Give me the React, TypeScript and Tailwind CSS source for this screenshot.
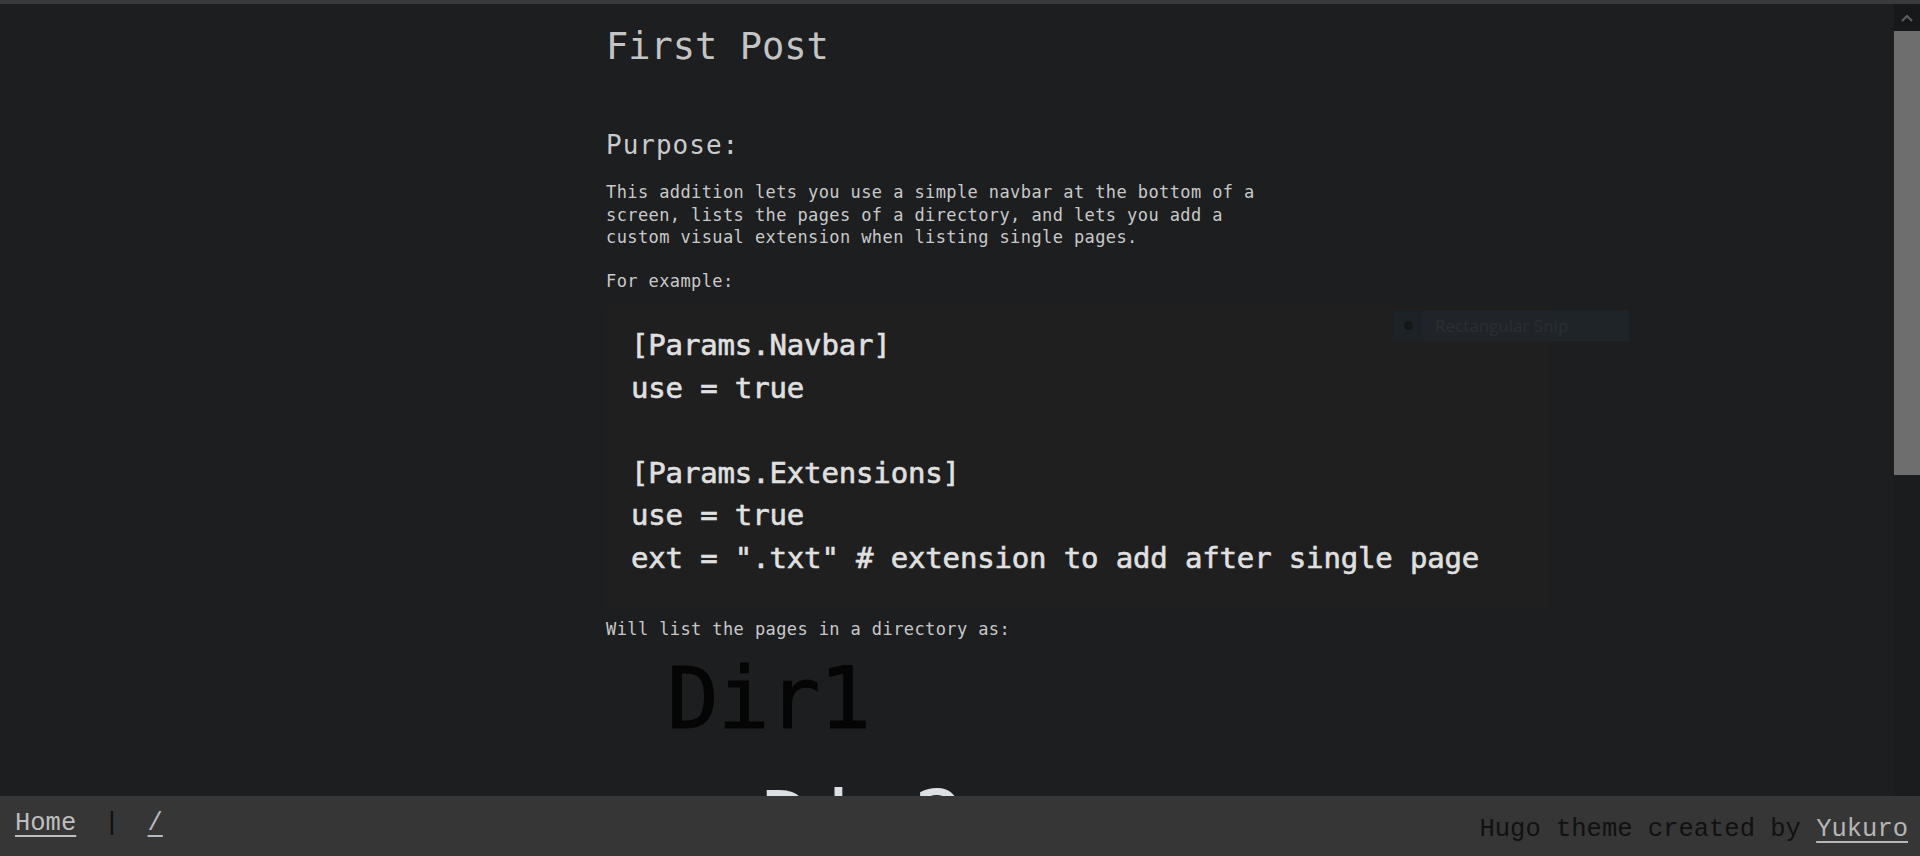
import React from "react";

const mono = { fontFamily: '"DejaVu Sans Mono", monospace' };
const courier = { fontFamily: '"Liberation Mono", "Courier New", monospace' };

const codeLines = [
  "[Params.Navbar]",
  "use = true",
  "",
  "[Params.Extensions]",
  "use = true",
  'ext = ".txt" # extension to add after single page',
];

function CodeShot() {
  return (
    <div className="relative mt-[14px] h-[304px] w-[943px] bg-[#1f1f1f] pt-[18px] pl-[25px]">
      {codeLines.map((line, i) => (
        <div
          key={i}
          className="h-[42.5px] whitespace-pre text-[29px] leading-[42.5px] tracking-[-0.15px] text-[#e0e0e0]"
          style={{ ...mono, WebkitTextStroke: "0.6px #e0e0e0" }}
        >
          {line}
        </div>
      ))}
      {/* leftover snipping tool overlay baked into the screenshot */}
      <div className="absolute left-[787px] top-[4px] flex h-[31px] w-[236px] items-center bg-[#21252a]/80">
        <div className="flex h-full w-[30px] items-center justify-center bg-[#1d2226]">
          <span className="h-[9px] w-[9px] rounded-full bg-[#141618]" />
        </div>
        <span
          className="ml-[12px] text-[17px] text-[#2b2f33]"
          style={{ fontFamily: '"Open Sans", sans-serif' }}
        >
          Rectangular Snip
        </span>
      </div>
    </div>
  );
}

function Scrollbar() {
  return (
    <div className="flex w-[26px] shrink-0 flex-col bg-[#1b1c1e]">
      <div className="flex h-[27px] items-center justify-center bg-[#17181a]">
        <svg width="12" height="8" viewBox="0 0 12 8">
          <path d="M1 7 L6 2 L11 7" stroke="#5e5e5e" strokeWidth="2.2" fill="none" />
        </svg>
      </div>
      <div className="h-[444px] bg-[#6e6e6e]" />
    </div>
  );
}

export default function App() {
  return (
    <div className="flex h-[856px] w-full flex-col overflow-hidden bg-[#1d1e20]">
      <div className="h-[4px] shrink-0 bg-[#3a3a3c]" />

      <div className="flex min-h-0 flex-1">
        <main className="min-w-0 flex-1 overflow-hidden pl-[606px] text-[#c9c9c9]">
          <h1
            className="mt-[20px] text-[37px] leading-[46px] text-[#c4c4c4]"
            style={mono}
          >
            First Post
          </h1>

          <h2
            className="mt-[59px] text-[26px] leading-[32px] tracking-[1px] text-[#cacaca]"
            style={mono}
          >
            Purpose:
          </h2>

          <p
            className="mt-[20px] w-[670px] text-[17px] leading-[22.5px] tracking-[0.4px]"
            style={mono}
          >
            This addition lets you use a simple navbar at the bottom of a screen, lists the
            pages of a directory, and lets you add a custom visual extension when listing
            single pages.
          </p>

          <p className="mt-[21px] text-[17px] leading-[22.5px] tracking-[0.4px]" style={mono}>
            For example:
          </p>

          <CodeShot />

          <p className="mt-[8px] text-[17px] leading-[22.5px] tracking-[0.4px]" style={mono}>
            Will list the pages in a directory as:
          </p>

          <div
            className="mt-[7px] ml-[61px] text-[86px] leading-[100px] tracking-[-1px] text-[#050505]"
            style={{ ...mono, WebkitTextStroke: "1px #050505" }}
          >
            Dir1
          </div>
          <div
            className="mt-[24px] ml-[155px] text-[86px] leading-[100px] tracking-[-1px] text-[#dcdfe3]"
            style={mono}
          >
            Dir2
          </div>
        </main>

        <Scrollbar />
      </div>

      <footer
        className="flex h-[60px] shrink-0 items-start justify-between bg-[#363636] text-[25.5px] leading-[30px]"
        style={courier}
      >
        <nav className="flex gap-[28px] pt-[13px] pl-[15px]">
          <a href="#" className="text-[#bfbfbf] underline underline-offset-[5px]">
            Home
          </a>
          <span className="text-[#0d0d0d]">|</span>
          <a href="#" className="text-[#b4b8c0] underline underline-offset-[5px]">
            /
          </a>
        </nav>
        <div className="pt-[19px] pr-[12px] text-[#111111]">
          Hugo theme created by{" "}
          <a href="#" className="text-[#b5b5b5] underline underline-offset-[5px]">
            Yukuro
          </a>
        </div>
      </footer>
    </div>
  );
}
